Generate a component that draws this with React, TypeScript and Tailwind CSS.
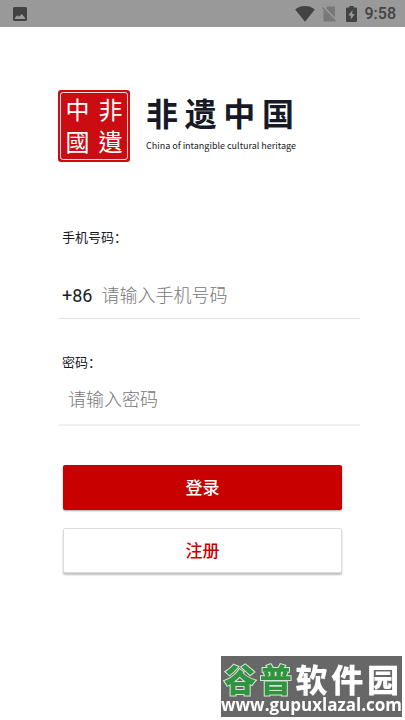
const cjk = "font-['Roboto','Noto_Sans_CJK_SC',sans-serif]";

function StatusBar() {
  return (
    <header className="flex h-[27px] items-center justify-between bg-[#999999] pl-[13px] pr-[9px] text-[#424242]">
      <svg className="size-[14px]" viewBox="0 0 14 14" aria-hidden="true">
        <rect width="14" height="14" rx="1.5" fill="currentColor" />
        <path
          d="M2 12V10.5L4.5 8.3L6 9.8L8.8 7L12 10.8V12Z"
          fill="#999999"
        />
      </svg>
      <div className="flex items-center">
        <svg className="h-4 w-5" viewBox="0 0 20 16" aria-hidden="true">
          <path
            d="M10 15.8L0.2 3.4C3 1.2 6.3 0 10 0S17 1.2 19.8 3.4Z"
            fill="currentColor"
          />
        </svg>
        <svg
          className="ml-[7px] h-4 w-[14px]"
          viewBox="0 0 14 16"
          aria-hidden="true"
        >
          <path
            d="M5.5 0.5H12Q13 0.5 13 1.5V11.5L4 2ZM1.5 4L12.5 15.2Q12 15.5 11.5 15.5H2.5Q1.5 15.5 1.5 14.5Z"
            fill="#777777"
          />
          <path d="M0.5 1.5L13.5 15.2" stroke="#777777" strokeWidth="1.3" />
        </svg>
        <svg
          className="ml-[10px] h-4 w-[11px]"
          viewBox="0 0 10 16"
          preserveAspectRatio="none"
          aria-hidden="true"
        >
          <path
            d="M3 0H7V1.6H9Q10 1.6 10 2.6V15Q10 16 9 16H1Q0 16 0 15V2.6Q0 1.6 1 1.6H3Z"
            fill="currentColor"
          />
          <path d="M6 4L2 9.5H4.4V13.5L8 8H5.6Z" fill="#999999" />
        </svg>
        <span className="ml-2 font-['Roboto',sans-serif] text-base font-medium leading-5">
          9:58
        </span>
      </div>
    </header>
  );
}

function Seal() {
  return (
    <div className="flex size-[72px] rounded-[3px] bg-[#cb0c12] p-[2px]">
      <div className="grid flex-1 grid-cols-2 place-items-center rounded-[3px] border border-[#f9d9d9] pb-[2px] font-['Noto_Sans_CJK_TC',sans-serif] text-2xl leading-8 text-white">
        <span>中</span>
        <span>非</span>
        <span>國</span>
        <span>遺</span>
      </div>
    </div>
  );
}

function Brand() {
  return (
    <div className="flex items-start gap-4">
      <Seal />
      <div className="flex w-[148px] flex-col gap-1 text-[#171a26]">
        <h1 className="flex justify-between font-['Noto_Sans_CJK_SC',sans-serif] text-[32px] font-bold leading-[44px]">
          <span>非</span>
          <span>遗</span>
          <span>中</span>
          <span>国</span>
        </h1>
        <p className="whitespace-nowrap font-['Noto_Sans_CJK_SC',sans-serif] text-[9px] leading-4">
          China of intangible cultural heritage
        </p>
      </div>
    </div>
  );
}

function Watermark() {
  return (
    <div className="fixed bottom-[3px] right-[3px] flex h-[61px] w-[181px] flex-col bg-[#676767] text-white">
      <p className="flex justify-between px-[3px] pt-[5px] font-['Noto_Sans_CJK_SC',sans-serif] text-[32px] font-black leading-[34px]">
        <span className="text-[#2f9440] [-webkit-text-stroke:2px_#d5e5d5] [paint-order:stroke_fill]">
          谷
        </span>
        <span className="text-[#2f9440] [-webkit-text-stroke:2px_#d5e5d5] [paint-order:stroke_fill]">
          普
        </span>
        <span>软</span>
        <span>件</span>
        <span>园</span>
      </p>
      <p className="text-center font-['Open_Sans',sans-serif] text-[17px] font-bold leading-5">
        www.gupuxlazal.com
      </p>
    </div>
  );
}

export default function App() {
  return (
    <div className={`min-h-screen bg-white text-[#171a26] ${cjk}`}>
      <StatusBar />
      <main className="pb-36 pl-[58px] pr-[45px] pt-[63px]">
        <Brand />
        <form onSubmit={(e) => e.preventDefault()}>
          {/* Phone number */}
          <label
            htmlFor="phone"
            className="mt-[66px] block pl-1 text-[13px] leading-5"
          >
            手机号码：
          </label>
          <div className="mt-9 flex h-[35px] items-start gap-[9px] border-b border-[#e4e4e4] pl-1 text-lg leading-6">
            <span>+86</span>
            <input
              id="phone"
              type="tel"
              placeholder="请输入手机号码"
              className="h-6 min-w-0 flex-1 font-light outline-none placeholder:text-[#777777]"
            />
          </div>

          {/* Password */}
          <label
            htmlFor="password"
            className="mt-[34px] block pl-1 text-[13px] leading-5"
          >
            密码：
          </label>
          <div className="mt-[15px] flex h-[38px] items-start border-b-2 border-[#f0f0f0] pl-[10px] text-lg leading-6">
            <input
              id="password"
              type="password"
              placeholder="请输入密码"
              className="h-6 min-w-0 flex-1 font-light outline-none placeholder:text-[#777777]"
            />
          </div>

          <div className="ml-[5px] mr-[18px] mt-[39px] flex flex-col gap-[18px]">
            <button
              type="submit"
              className="h-[45px] rounded-[2px] bg-[#c90000] text-[17px] font-medium leading-6 text-white shadow-[0_1px_2px_rgba(0,0,0,0.35)]"
            >
              登录
            </button>
            <button
              type="button"
              className="h-[45px] rounded-[2px] border border-[#dcdcdc] bg-white text-[17px] font-medium leading-6 text-[#c90000] shadow-[0_2px_2px_rgba(0,0,0,0.25)]"
            >
              注册
            </button>
          </div>
        </form>
      </main>
      <Watermark />
    </div>
  );
}
